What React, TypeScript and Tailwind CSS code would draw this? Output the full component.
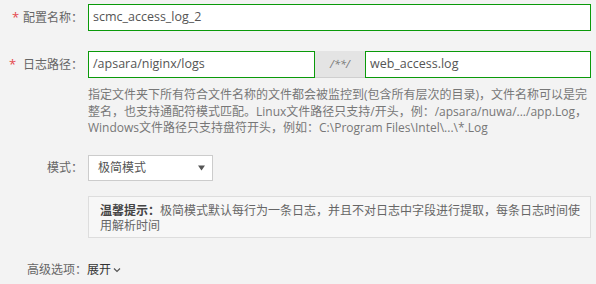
import React from 'react';

const font = "font-['Open_Sans','Noto_Sans_CJK_SC',sans-serif]";

const Label = ({ text, star }: { text: string; star?: string }) => (
    <div className="w-[88px] h-[27px] shrink-0 flex items-center pr-[5px]">
        {star && <span className={`${star} text-[#e5484d] text-[13px]`}>*</span>}
        <span className="ml-auto text-[#666]">{text}</span>
    </div>
);

export default function App() {
    return (
        <div className={`w-[596px] h-[284px] bg-[#f3f3f3] pt-[4px] text-[12px] overflow-hidden ${font}`}>
            <div className="flex">
                <Label text="配置名称：" star="pl-[12px]" />
                <div className="w-[503px] h-[27px] bg-white border border-[#0a9a0a] flex items-center px-[4px] text-[12.5px] text-[#555]">
                    scmc_access_log_2
                </div>
            </div>

            <div className="flex mt-[20px]">
                <Label text="日志路径：" star="pl-[9px]" />
                <div className="flex w-[503px]">
                    <div className="w-[227px] h-[27px] bg-white border border-[#0a9a0a] flex items-center px-[4px] text-[12.5px] text-[#555]">
                        /apsara/niginx/logs
                    </div>
                    <div className="w-[50px] h-[27px] bg-[#e4e4e4] border-b border-[#cfcfcf] flex items-center justify-center text-[11px] text-[#777] italic">
                        /**/
                    </div>
                    <div className="flex-1 h-[27px] bg-white border border-[#0a9a0a] flex items-center px-[4px] text-[12.5px] text-[#555]">
                        web_access.log
                    </div>
                </div>
            </div>

            <div className="ml-[88px] mt-[9px] w-[505px] text-[#777] leading-[16.5px]">
                指定文件夹下所有符合文件名称的文件都会被监控到(包含所有层次的目录)，文件名称可以是完整名，也支持通配符模式匹配。Linux文件路径只支持/开头，例：/apsara/nuwa/.../app.Log，Windows文件路径只支持盘符开头，例如：C:\Program Files\Intel\...\*.Log
            </div>

            <div className="flex mt-[18px]">
                <Label text="模式：" />
                <div className="w-[125px] h-[26px] bg-white border border-[#cccccc] flex items-center justify-between pl-[9px] pr-[7px] text-[#555]">
                    <span>极简模式</span>
                    <svg width="7" height="6" viewBox="0 0 7 6">
                        <path d="M0 0.5H7L3.5 5.5Z" fill="#555" />
                    </svg>
                </div>
            </div>

            <div className="ml-[88px] mt-[14px] w-[503px] h-[42px] bg-[#f7f7f7] border border-[#dddddd] pl-[11px] pr-[6px] pt-[6px] leading-[15px] text-[#666]">
                <span className="font-semibold text-[#444]">温馨提示：</span>极简模式默认每行为一条日志，并且不对日志中字段进行提取，每条日志时间使用解析时间
            </div>

            <div className="flex items-center mt-[23px] h-[18px]">
                <div className="w-[88px] pl-[27px] text-[#666] shrink-0">高级选项：</div>
                <span className="text-[#333] -ml-[1px]">展开</span>
                <svg width="8" height="6" viewBox="0 0 8 6" className="ml-[2px] mt-[1px]">
                    <path d="M1 1.5L4 4.5L7 1.5" stroke="#555" strokeWidth="1.2" fill="none" />
                </svg>
            </div>
        </div>
    );
}
